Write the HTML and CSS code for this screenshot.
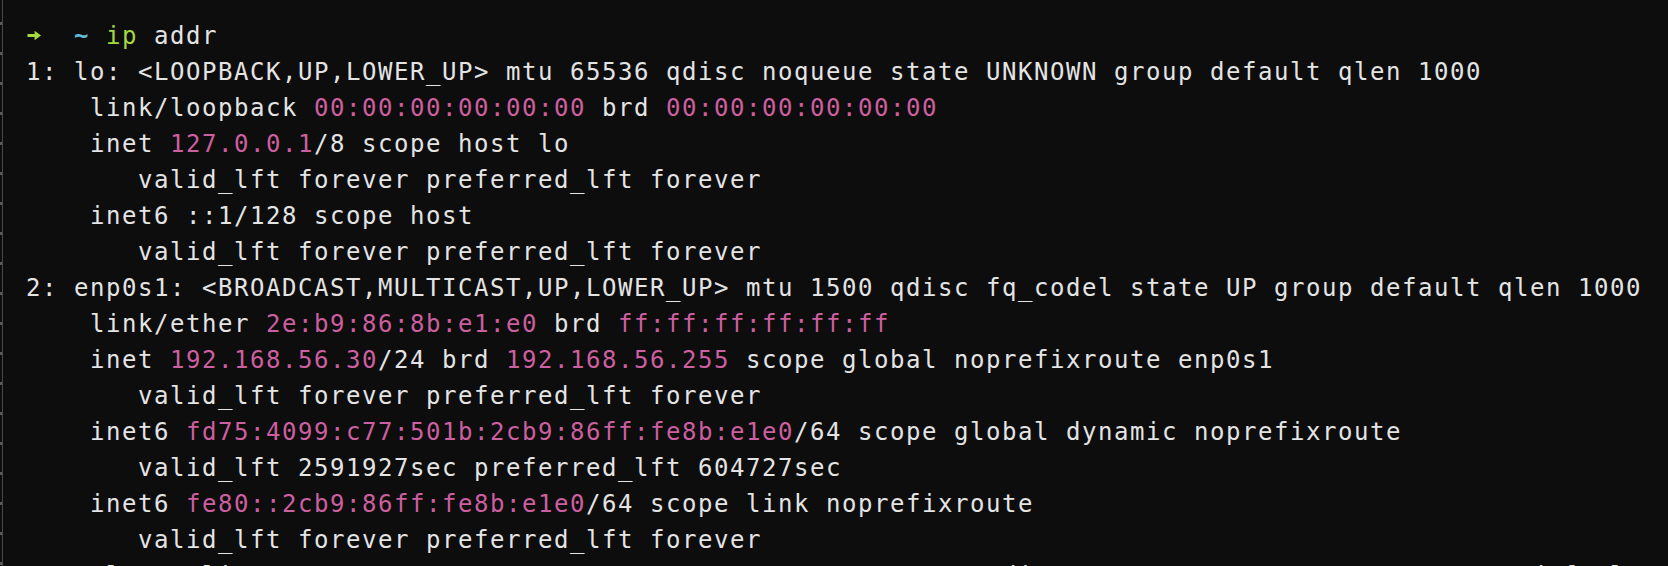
FILE: index.html
```html
<!DOCTYPE html>
<html lang="en">
<head>
<meta charset="utf-8">
<title>ip addr</title>
<link rel="stylesheet" href="styles.css">
</head>
<body>
<div class="screen">
  <div class="edge"></div>
  <div class="divider"></div>
  <pre class="term"><svg class="arrow" width="16" height="11" viewBox="0 0 16 11" aria-hidden="true"><path d="M1.5 4 H8.6 V0.8 L15 5.5 L8.6 10.2 V7 H1.5 Z" fill="#a6d93b"/></svg>  <span class="c tilde">~</span> <span class="g">ip</span> addr
1: lo: &lt;LOOPBACK,UP,LOWER_UP&gt; mtu 65536 qdisc noqueue state UNKNOWN group default qlen 1000
    link/loopback <span class="p">00:00:00:00:00:00</span> brd <span class="p">00:00:00:00:00:00</span>
    inet <span class="p">127.0.0.1</span>/8 scope host lo
       valid_lft forever preferred_lft forever
    inet6 ::1/128 scope host
       valid_lft forever preferred_lft forever
2: enp0s1: &lt;BROADCAST,MULTICAST,UP,LOWER_UP&gt; mtu 1500 qdisc fq_codel state UP group default qlen 1000
    link/ether <span class="p">2e:b9:86:8b:e1:e0</span> brd <span class="p">ff:ff:ff:ff:ff:ff</span>
    inet <span class="p">192.168.56.30</span>/24 brd <span class="p">192.168.56.255</span> scope global noprefixroute enp0s1
       valid_lft forever preferred_lft forever
    inet6 <span class="p">fd75:4099:c77:501b:2cb9:86ff:fe8b:e1e0</span>/64 scope global dynamic noprefixroute
       valid_lft 2591927sec preferred_lft 604727sec
    inet6 <span class="p">fe80::2cb9:86ff:fe8b:e1e0</span>/64 scope link noprefixroute
       valid_lft forever preferred_lft forever
3: vxlan.calico: &lt;BROADCAST,MULTICAST,UP,LOWER_UP&gt; mtu 1450 qdisc noqueue state UNKNOWN group default qlen 1000</pre>
</div>
</body>
</html>
```

FILE: styles.css
```css
html, body {
  margin: 0;
  padding: 0;
  background: #0d0d0d;
  overflow: hidden;
}

.screen {
  display: flex;
  height: 566px;
  overflow: hidden;
}

.edge {
  width: 2px;
  flex: none;
  background: repeating-linear-gradient(to bottom, #0d0d0d 0, #0d0d0d 22px, #5a5a5a 22px, #5a5a5a 25px, #0d0d0d 25px, #0d0d0d 30px);
}

.divider {
  width: 1px;
  flex: none;
  background: #4a4a4a;
}

.term {
  flex: 1;
  margin: 0;
  padding: 18px 0 0 23px;
  font-family: "DejaVu Sans Mono", monospace;
  font-size: 24px;
  letter-spacing: 1.55px;
  line-height: 36px;
  color: #e4e4e4;
  white-space: pre;
  overflow: hidden;
}

.g { color: #a6d93b; }
.c { color: #5fb8d6; }
.p { color: #cc5f9f; }

.arrow {
  vertical-align: 3px;
}

.tilde { font-weight: bold; }
```
